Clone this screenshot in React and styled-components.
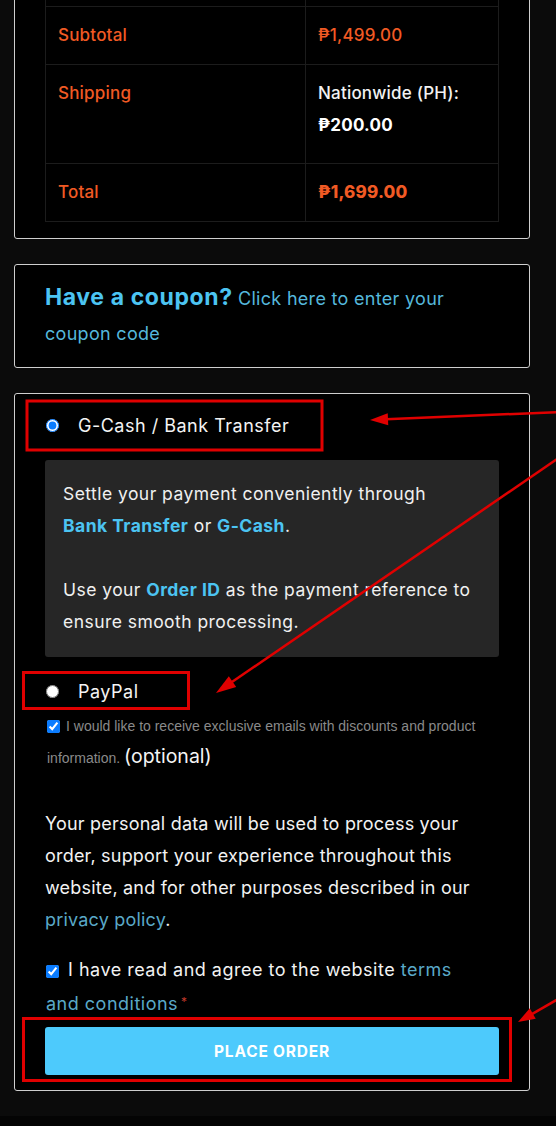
import React from "react";
import styled, { createGlobalStyle } from "styled-components";

const GlobalStyle = createGlobalStyle`
  html, body {
    margin: 0;
    padding: 0;
    background: #0b0b0b;
  }
  body {
    font-family: Inter, "Noto Sans", "DejaVu Sans", sans-serif;
    color: #f2f2f2;
    -webkit-font-smoothing: antialiased;
  }
  * { box-sizing: border-box; }
`;

const Viewport = styled.div`
  position: relative;
  width: 556px;
  height: 1126px;
  overflow: hidden;
  background: #0b0b0b;
`;

const Page = styled.div`
  display: flex;
  flex-direction: column;
  gap: 25px;
  width: 516px;
  margin: -83px 0 0 14px;
`;

const Card = styled.section`
  background: #000;
  border: 1px solid #cfcfcf;
  border-radius: 3px;
  padding: ${(p) => p.$pad || "30px"};
`;

const Totals = styled.table`
  width: 100%;
  border-collapse: collapse;
  table-layout: fixed;
  font-size: 17px;
  letter-spacing: 0.2px;
  line-height: 32px;
`;

const Cell = styled.td`
  border: 1px solid #1c1c1c;
  padding: ${(p) => p.$pad || "12px 12px 13px"};
  vertical-align: top;
  color: ${(p) => p.$color || "#f2f2f2"};
  font-weight: 500;
  width: ${(p) => p.$w || "auto"};
`;

const Money = styled.span`
  font-weight: ${(p) => p.$weight || 500};
  color: ${(p) => p.$color || "inherit"};
`;

const CouponText = styled.p`
  margin: 0;
  line-height: 35px;
  font-size: 18px;
  letter-spacing: 0.3px;
  color: #55b8dc;
`;

const CouponTitle = styled.strong`
  font-size: 23px;
  line-height: 1;
  font-weight: 700;
  color: #4cc4f2;
  letter-spacing: 0.6px;
`;

const Methods = styled.div`
  display: flex;
  flex-direction: column;
`;

const MethodRow = styled.label`
  display: flex;
  align-items: center;
  gap: 19px;
  height: 32px;
  margin: ${(p) => p.$margin || "0"};
  font-size: 18px;
  letter-spacing: 0.5px;
  color: #f4f4f4;
`;

const Radio = styled.input.attrs({ type: "radio" })`
  width: 13px;
  height: 13px;
  margin: 0 0 0 1px;
  accent-color: #0a7cff;
`;

const PaymentBox = styled.div`
  margin-top: 19px;
  background: #262626;
  border-radius: 3px;
  padding: 18px 12px 19px 18px;
  font-size: 17.5px;
  letter-spacing: 0.45px;
  line-height: 32px;
  color: #f0f0f0;
`;

const Para = styled.p`
  margin: 0 0 ${(p) => p.$gap || "0"};
`;

const Accent = styled.strong`
  color: #4cc4f2;
  font-weight: 700;
  white-space: nowrap;
`;

const OptIn = styled.div`
  margin-top: 4px;
  padding-left: 2px;
  line-height: 30px;
  font-family: "Liberation Sans", Arial, sans-serif;
  font-size: 14px;
  color: #8a8a8a;
`;

const Check = styled.input.attrs({ type: "checkbox" })`
  width: 13px;
  height: 13px;
  margin: 0 ${(p) => p.$space || "7px"} 0 0;
  vertical-align: -2px;
  accent-color: #0a7cff;
`;

const Optional = styled.span`
  font-family: Inter, "Noto Sans", sans-serif;
  font-size: 19.5px;
  color: #f4f4f4;
`;

const Privacy = styled.p`
  margin: 35px 0 0;
  font-size: 18px;
  letter-spacing: 0.2px;
  line-height: 32px;
  color: #f2f2f2;
`;

const Link = styled.a`
  color: #5aa9c8;
  text-decoration: none;
`;

const Terms = styled.p`
  margin: 18px 0 0;
  padding-left: 1px;
  max-width: 430px;
  font-size: 18px;
  letter-spacing: 0.5px;
  line-height: 32px;
  color: #f2f2f2;
`;

const Required = styled.abbr`
  color: #c0392b;
  font-size: 12px;
  text-decoration: none;
  margin-left: 3px;
  vertical-align: 4px;
`;

const PlaceOrder = styled.button`
  margin-top: 7px;
  height: 48px;
  width: 100%;
  border: none;
  border-radius: 3px;
  background: #4dcafc;
  color: #fff;
  font-family: Inter, "Noto Sans", sans-serif;
  font-weight: 700;
  font-size: 15.5px;
  letter-spacing: 0.8px;
`;

const BottomBand = styled.div`
  position: absolute;
  left: 0;
  right: 0;
  bottom: 0;
  height: 10px;
  background: #040404;
`;

/* red callouts drawn over the checkout form */
const Callouts = styled.svg`
  position: absolute;
  top: 0;
  left: 0;
  pointer-events: none;
`;

const RED = "#e00000";

function Arrow({ x1, y1, x2, y2, head = 18, half = 6 }) {
  const dx = x2 - x1;
  const dy = y2 - y1;
  const len = Math.hypot(dx, dy);
  const ux = dx / len;
  const uy = dy / len;
  const bx = x2 - ux * head;
  const by = y2 - uy * head;
  const px = -uy * half;
  const py = ux * half;
  return (
    <g>
      <line x1={x1} y1={y1} x2={bx + ux * 2} y2={by + uy * 2} stroke={RED} strokeWidth="2.5" />
      <polygon
        points={`${x2},${y2} ${bx + px},${by + py} ${bx - px},${by - py}`}
        fill={RED}
      />
    </g>
  );
}

export default function App() {
  return (
    <Viewport>
      <GlobalStyle />
      <Page>
        <Card $pad="30px 30px 16px">
          <Totals>
            <tbody>
              <tr>
                <Cell $color="#f15a24" $w="260px">Product</Cell>
                <Cell $color="#f15a24">Subtotal</Cell>
              </tr>
              <tr>
                <Cell $color="#f15a24" $w="260px">Subtotal</Cell>
                <Cell>
                  <Money $color="#f15a24">₱1,499.00</Money>
                </Cell>
              </tr>
              <tr>
                <Cell $color="#f15a24" $pad="12px 12px 22px">Shipping</Cell>
                <Cell $pad="12px 12px 22px">
                  Nationwide (PH):
                  <br />
                  <Money $weight={700} $color="#fff">₱200.00</Money>
                </Cell>
              </tr>
              <tr>
                <Cell $color="#f15a24">Total</Cell>
                <Cell>
                  <Money $weight={800} $color="#f15a24">₱1,699.00</Money>
                </Cell>
              </tr>
            </tbody>
          </Totals>
        </Card>

        <Card $pad="16px 30px">
          <CouponText>
            <CouponTitle>Have a coupon?</CouponTitle> Click here to enter your coupon code
          </CouponText>
        </Card>

        <Card $pad="15px 30px 15px">
          <Methods>
            <MethodRow>
              <Radio name="pay" defaultChecked />
              G-Cash / Bank Transfer
            </MethodRow>
            <PaymentBox>
              <Para $gap="32px">
                Settle your payment conveniently through <Accent>Bank Transfer</Accent> or{" "}
                <Accent>G-Cash</Accent>.
              </Para>
              <Para>
                Use your <Accent>Order ID</Accent> as the payment reference to ensure smooth
                processing.
              </Para>
            </PaymentBox>
            <MethodRow $margin="18px 0 0">
              <Radio name="pay" />
              PayPal
            </MethodRow>
          </Methods>

          <OptIn>
            <Check defaultChecked $space="6px" />I would like to receive exclusive emails with
            discounts and product information. <Optional>(optional)</Optional>
          </OptIn>

          <Privacy>
            Your personal data will be used to process your order, support your experience
            throughout this website, and for other purposes described in our{" "}
            <Link href="#">privacy policy</Link>.
          </Privacy>

          <Terms>
            <Check defaultChecked $space="9px" />I have read and agree to the website{" "}
            <Link href="#">terms and conditions</Link>
            <Required title="required">*</Required>
          </Terms>

          <PlaceOrder>PLACE ORDER</PlaceOrder>
        </Card>
      </Page>
      <BottomBand />

      <Callouts width="556" height="1126" viewBox="0 0 556 1126">
        <rect x="27" y="401" width="295" height="49" fill="none" stroke={RED} strokeWidth="3" />
        <rect x="23.5" y="672.5" width="165" height="36" fill="none" stroke={RED} strokeWidth="3" />
        <rect x="23.5" y="1018.5" width="487" height="62" fill="none" stroke={RED} strokeWidth="3" />
        <Arrow x1={560} y1={412} x2={370} y2={420} head={18} half={6} />
        <Arrow x1={560} y1={457} x2={216} y2={693} head={20} half={6.5} />
        <Arrow x1={560} y1={998} x2={518} y2={1022} head={17} half={6} />
      </Callouts>
    </Viewport>
  );
}
